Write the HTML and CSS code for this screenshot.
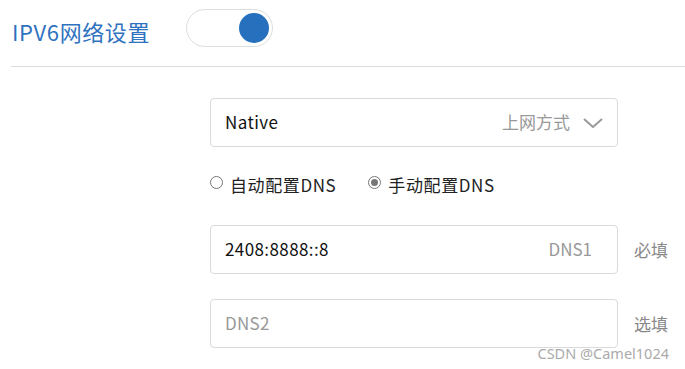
FILE: index.html
```html
<!DOCTYPE html>
<html lang="zh-CN">
<head>
    <meta charset="UTF-8">
    <title>IPV6网络设置</title>
    <link rel="stylesheet" href="styles.css">
</head>
<body>
    <div class="cabecera">
        <h1>IPV6网络设置</h1>
        <div class="interruptor activo"><span class="perilla"></span></div>
    </div>

    <div class="formulario">
        <div class="fila">
            <div class="campo selector">
                <span class="valor">Native</span>
                <span class="etiqueta">上网方式</span>
                <svg class="flecha" width="20" height="10" viewBox="0 0 20 10"><path d="M1 1 L10 9 L19 1" fill="none" stroke="#9a9a9a" stroke-width="2"/></svg>
            </div>
        </div>

        <div class="radios">
            <label class="radio"><span class="circulo"></span>自动配置DNS</label>
            <label class="radio marcado"><span class="circulo"></span>手动配置DNS</label>
        </div>

        <div class="fila">
            <div class="campo">
                <span class="valor">2408:8888::8</span>
                <span class="etiqueta">DNS1</span>
            </div>
            <span class="nota">必填</span>
        </div>

        <div class="fila">
            <div class="campo">
                <span class="placeholder">DNS2</span>
            </div>
            <span class="nota">选填</span>
        </div>
    </div>

    <div class="marca">CSDN @Camel1024</div>
</body>
</html>
```

FILE: styles.css
```css
body {
    margin: 0;
    font-family: "Noto Sans CJK SC", "Noto Sans", sans-serif;
    background: #fff;
    color: #222;
    position: relative;
    width: 685px;
    height: 369px;
    overflow: hidden;
}
.cabecera {
    display: flex;
    align-items: center;
    height: 67px;
    margin-left: 11px;
    border-bottom: 1px solid #dcdcdc;
    box-sizing: border-box;
}
.cabecera h1 {
    margin: 0 0 0 1px;
    font-size: 22px;
    font-weight: normal;
    color: #2f72bf;
    width: 174px;
    padding-bottom: 5px;
    letter-spacing: 0.6px;
}
.interruptor {
    width: 87px;
    height: 38px;
    border: 1px solid #dedede;
    border-radius: 20px;
    box-sizing: border-box;
    display: flex;
    align-items: center;
    justify-content: flex-end;
    padding-right: 3px;
    margin-bottom: 10px;
}
.perilla {
    width: 30px;
    height: 30px;
    border-radius: 50%;
    background: #2770be;
}
.formulario {
    padding-left: 210px;
    padding-top: 31px;
}
.fila {
    display: flex;
    align-items: center;
    margin-bottom: 25px;
}
.campo {
    width: 408px;
    height: 49px;
    border: 1px solid #dadada;
    border-radius: 4px;
    box-sizing: border-box;
    display: flex;
    align-items: center;
    padding: 0 25px 3px 14px;
    font-size: 17px;
}
.campo .valor {
    flex: 1;
    color: #111;
    letter-spacing: 0.4px;
}
.campo .etiqueta {
    color: #999;
}
.campo .placeholder {
    color: #999;
    letter-spacing: 0.3px;
}
.selector {
    padding-right: 14px;
}
.selector .etiqueta {
    margin-right: 13px;
}
.flecha {
    display: block;
    margin-top: 3px;
}
.nota {
    margin-left: 16px;
    font-size: 17px;
    color: #888;
}
.radios {
    display: flex;
    gap: 32px;
    font-size: 17px;
    color: #222;
    margin-top: -3px;
    margin-bottom: 26px;
    height: 30px;
    align-items: center;
}
.radio {
    display: flex;
    align-items: center;
    letter-spacing: 0.6px;
}
.circulo {
    width: 13px;
    height: 13px;
    border: 1px solid #777;
    border-radius: 50%;
    box-sizing: border-box;
    margin-right: 7px;
    margin-top: -4px;
    position: relative;
}
.radio.marcado .circulo::after {
    content: "";
    position: absolute;
    left: 2px;
    top: 2px;
    width: 7px;
    height: 7px;
    border-radius: 50%;
    background: #777;
}
.marca {
    position: absolute;
    right: 16px;
    bottom: 6px;
    font-size: 14.5px;
    color: #aaa;
    font-family: "Noto Sans", "Noto Sans CJK SC", sans-serif;
}
```
